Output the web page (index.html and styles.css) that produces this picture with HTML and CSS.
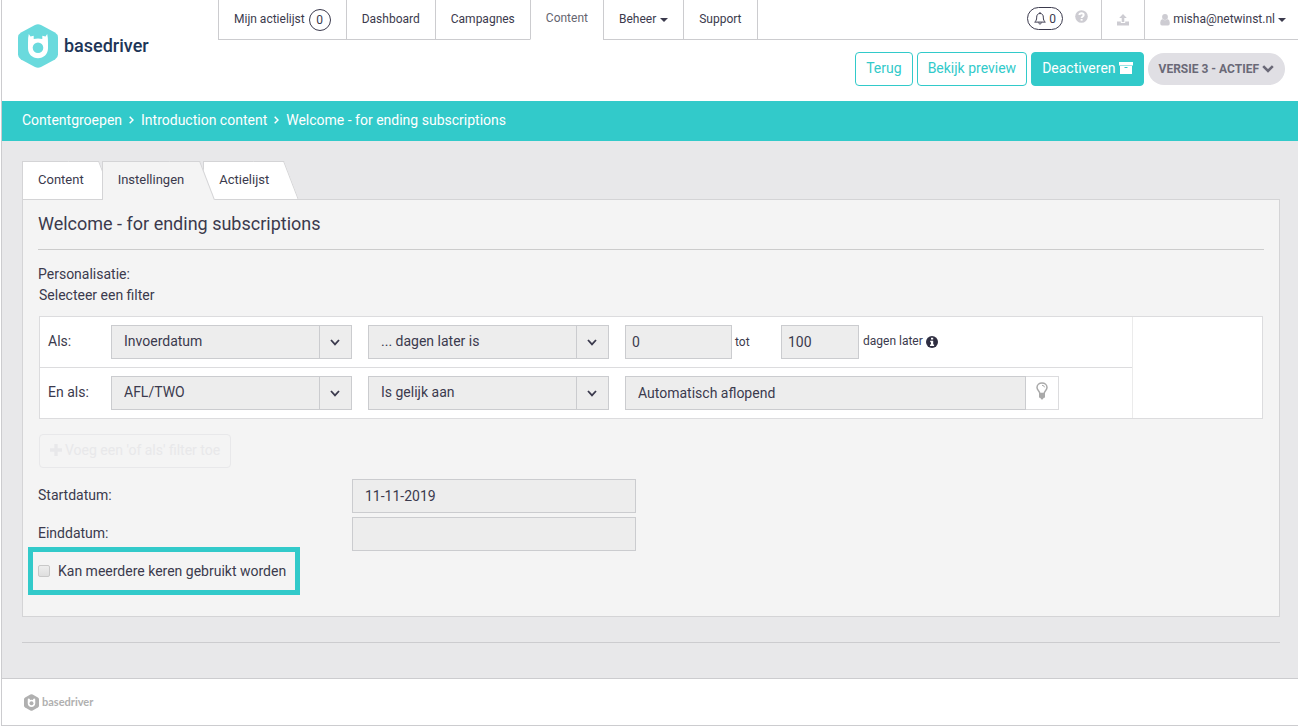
FILE: index.html
```html
<!DOCTYPE html>
<html lang="nl">
<head>
<meta charset="utf-8">
<title>Basedriver - Instellingen</title>
<link rel="stylesheet" href="styles.css">
</head>
<body>
<div class="app">
  <header class="header">
    <a class="brand" href="#">
      <svg class="brand-mark" viewBox="0 0 40 44" aria-hidden="true">
        <path fill="#6adadd" d="M17 .9q3-1.500 6 0l14 7.500q3 1.800 3 5v17q0 3.200-3 5l-14 7.700q-3 1.500-6 0L3 35.400q-3-1.800-3-5v-17q0-3.200 3-5z"/>
        <path fill="#fff" d="M10.800 10l1.700 2.500 3.200-.7v3.200q4.300-1.200 8.600 0v-3.200l3.200.7L29.200 10q1 4 .8 9v5.200c0 5.700-4.300 10-10 10s-10-4.300-10-10V19q-.2-5 .8-9z"/>
        <circle cx="20" cy="23.800" r="5.300" fill="#6adadd"/>
      </svg>
      <span class="brand-name">basedriver</span>
    </a>
    <div class="header-main">
      <nav class="nav">
        <a class="nav-item" href="#">Mijn actielijst <span class="count">0</span></a>
        <a class="nav-item" href="#">Dashboard</a>
        <a class="nav-item" href="#">Campagnes</a>
        <a class="nav-item nav-item-active" href="#">Content</a>
        <a class="nav-item" href="#">Beheer <span class="caret"></span></a>
        <a class="nav-item" href="#">Support</a>
        <div class="nav-tools">
          <button class="bell" type="button" aria-label="Meldingen">
            <svg width="12" height="13" viewBox="0 0 12 13" fill="none" stroke="#3b3a4d" aria-hidden="true"><path d="M6 1.500c-2.400 0-3.300 1.700-3.300 3.600 0 2.900-.8 4-2 5h10.600c-1.200-1-2-2.100-2-5 0-1.900-.9-3.600-3.300-3.600zM6 0v1.500M4.700 10.500c0 2 2.600 2 2.600 0"/></svg>
            <span>0</span>
          </button>
          <a class="help" href="#" aria-label="Help">
            <svg width="13" height="13" viewBox="0 0 13 13" aria-hidden="true"><circle cx="6.500" cy="6.500" r="6.300" fill="#cdccd2"/><path d="M4.400 5.100c0-2.500 4.300-2.400 4.300-.1 0 1.500-2.100 1.400-2.100 3.100" fill="none" stroke="#fff" stroke-width="1.900"/><path d="M5.600 9h2v1.700h-2z" fill="#fff"/></svg>
          </a>
        </div>
        <a class="nav-item" href="#" aria-label="Uploaden">
          <svg width="12" height="12" viewBox="0 0 12 12" fill="#cdccd2" aria-hidden="true"><path d="M6 0l3.800 4H7.300v4H4.700V4H2.200z"/><path d="M0 7.500h3.800V9h4.400V7.500H12v4H0z"/></svg>
        </a>
        <a class="nav-item account" href="#">
          <svg width="10" height="12" viewBox="0 0 10 12" fill="#cdccd2" aria-hidden="true"><circle cx="5" cy="3" r="2.900"/><path d="M2.200 5q2.800 2.500 5.600 0Q9.800 5.800 9.800 9q0 2.500-1.800 2.500H2Q.2 11.500.2 9q0-3.200 2-4z"/></svg>
          misha@netwinst.nl <span class="caret"></span>
        </a>
      </nav>
      <div class="actions">
        <button class="btn" type="button">Terug</button>
        <button class="btn" type="button">Bekijk preview</button>
        <button class="btn btn-solid" type="button">Deactiveren
          <svg width="14" height="12" viewBox="0 0 14 12" aria-hidden="true"><path fill="#fff" d="M0 0h14v3.500H0zM1 4h12v8H1z"/><path fill="#32caca" d="M5.500 5h3v1h-3z"/></svg>
        </button>
        <button class="version" type="button">VERSIE 3 - ACTIEF
          <svg width="12" height="8" viewBox="0 0 12 8" fill="none" stroke="#6a6977" stroke-width="2.600" aria-hidden="true"><path d="M1.200 1.200L6 6l4.800-4.800"/></svg>
        </button>
      </div>
    </div>
  </header>

  <nav class="crumbs" aria-label="Kruimelpad">
    <a href="#">Contentgroepen</a>
    <svg width="5" height="8" viewBox="0 0 5 8" aria-hidden="true"><path d="M.7.700L4 4 .7 7.300"/></svg>
    <a href="#">Introduction content</a>
    <svg width="5" height="8" viewBox="0 0 5 8" aria-hidden="true"><path d="M.7.700L4 4 .7 7.300"/></svg>
    <a href="#">Welcome - for ending subscriptions</a>
  </nav>

  <main class="main">
    <nav class="tabs">
      <a class="tab" href="#">Content</a>
      <a class="tab tab-active" href="#">Instellingen</a>
      <a class="tab" href="#">Actielijst</a>
    </nav>
    <section class="panel">
      <h1 class="title">Welcome - for ending subscriptions</h1>
      <p class="intro">Personalisatie:</p>
      <div class="filter">
        <p class="text">Selecteer een filter</p>
        <div class="rules">
          <div class="rules-list">
            <div class="rule">
              <label class="rule-label" for="field1">Als:</label>
              <span class="select">
                <select id="field1"><option>Invoerdatum</option></select>
                <svg width="10" height="7" viewBox="0 0 10 7" aria-hidden="true"><path d="M1 1l4 4.400L9 1"/></svg>
              </span>
              <span class="select">
                <select aria-label="Voorwaarde"><option>... dagen later is</option></select>
                <svg width="10" height="7" viewBox="0 0 10 7" aria-hidden="true"><path d="M1 1l4 4.400L9 1"/></svg>
              </span>
              <div class="range">
                <input class="input input-from" id="from" type="text" value="0" aria-label="Van">
                <label class="range-to" for="to">tot</label>
                <input class="input input-to" id="to" type="text" value="100">
                <span class="range-unit">dagen later
                  <svg width="12" height="12" viewBox="0 0 12 12" aria-hidden="true"><circle cx="6" cy="6" r="6" fill="#2f2e41"/><path fill="#fff" d="M5 1.700h2.200v1.900H5zM4.200 4.700h3v3.700h.9V10H4V8.400h1V6.200h-.8z"/></svg>
                </span>
              </div>
            </div>
            <div class="rule">
              <label class="rule-label" for="field2">En als:</label>
              <span class="select">
                <select id="field2"><option>AFL/TWO</option></select>
                <svg width="10" height="7" viewBox="0 0 10 7" aria-hidden="true"><path d="M1 1l4 4.400L9 1"/></svg>
              </span>
              <span class="select">
                <select aria-label="Voorwaarde"><option>Is gelijk aan</option></select>
                <svg width="10" height="7" viewBox="0 0 10 7" aria-hidden="true"><path d="M1 1l4 4.400L9 1"/></svg>
              </span>
              <div class="value">
                <input class="input input-wide" type="text" value="Automatisch aflopend" aria-label="Waarde">
                <button class="hint" type="button" aria-label="Suggesties">
                  <svg width="12" height="18" viewBox="0 0 12 18" aria-hidden="true"><path d="M3.800 11.500C3.800 9 1 8.500 1 5.500 1 2.900 3.200 1 6 1s5 1.900 5 4.500c0 3-2.800 3.500-2.800 6z" fill="none" stroke="#a9a9a9" stroke-width="1.500"/><path d="M6 3.300q2.300 0 2.500 2" fill="none" stroke="#a9a9a9"/><path d="M3 11.300h6v4.200L7.500 16q-.3 1.600-1.500 1.600T4.500 16L3 15.500z" fill="#a9a9a9"/></svg>
                </button>
              </div>
            </div>
          </div>
          <div class="rules-side"></div>
        </div>
        <button class="add" type="button" disabled>
          <svg width="12" height="12" viewBox="0 0 12 12" aria-hidden="true"><path fill="#e8e8ea" d="M4.300 0h3.400v4.300H12v3.400H7.700V12H4.300V7.700H0V4.300h4.300z"/></svg>
          Voeg een 'of als' filter toe
        </button>
      </div>
      <div class="dates">
        <label for="start">Startdatum:</label>
        <input class="input input-wide" id="start" type="text" value="11-11-2019">
        <label for="end">Einddatum:</label>
        <input class="input input-wide" id="end" type="text">
      </div>
      <label class="check"><input type="checkbox"> Kan meerdere keren gebruikt worden</label>
    </section>
    <hr class="rule-line">
  </main>

  <footer class="footer">
    <svg width="15" height="17" viewBox="0 0 40 44" aria-hidden="true">
      <path fill="#b0b0b0" d="M17 .9q3-1.500 6 0l14 7.500q3 1.800 3 5v17q0 3.200-3 5l-14 7.700q-3 1.500-6 0L3 35.400q-3-1.800-3-5v-17q0-3.200 3-5z"/>
      <path fill="#fff" d="M10.800 10l1.700 2.500 3.200-.7v3.200q4.300-1.200 8.600 0v-3.200l3.200.7L29.200 10q1 4 .8 9v5.200c0 5.700-4.300 10-10 10s-10-4.300-10-10V19q-.2-5 .8-9z"/>
      <circle cx="20" cy="23.800" r="5.300" fill="#b0b0b0"/>
    </svg>
    <span>basedriver</span>
  </footer>
</div>
</body>
</html>
```
FILE: styles.css
```css
* { box-sizing: border-box; }

body {
  margin: 0;
  background: #fff;
  color: #3b3a4d;
  font: 14px/21px Roboto, "Liberation Sans", sans-serif;
}

a { color: inherit; text-decoration: none; }
p, h1 { margin: 0; font-weight: 400; }
button, input, select { font: inherit; color: inherit; margin: 0; }
svg { flex: none; }

.app {
  display: flex;
  flex-direction: column;
  min-height: 100vh;
  margin-left: 1px;
  border-left: 1px solid #cccccf;
  border-bottom: 1px solid #cccccf;
}

/* Header */
.header { display: flex; height: 101px; }

.brand {
  display: flex;
  align-items: center;
  gap: 6px;
  width: 216px;
  padding: 0 0 10px 16px;
}
.brand-mark { width: 40px; height: 44px; }
.brand-name { color: #1d3557; font-size: 18px; font-weight: 500; }

.header-main { flex: 1; display: flex; flex-direction: column; }

.nav { display: flex; font-size: 12px; line-height: 39px; }
.nav-item {
  display: flex;
  align-items: center;
  gap: 4px;
  height: 40px;
  padding: 0 15px;
  border-left: 1px solid #cccccf;
  border-bottom: 1px solid #cccccf;
  white-space: nowrap;
}
.nav-item-active { border-bottom-color: transparent; color: #66656f; padding-bottom: 2px; }
.count {
  width: 22px;
  height: 22px;
  border: 1px solid #3b3a4d;
  border-radius: 11px;
  line-height: 20px;
  text-align: center;
}
.caret {
  border: 4px solid transparent;
  border-top-color: #3b3a4d;
  border-bottom: 0;
}
.nav-tools {
  flex: 1;
  display: flex;
  justify-content: flex-end;
  gap: 12px;
  padding: 7px 13px 0 0;
  border-left: 1px solid #cccccf;
  border-bottom: 1px solid #cccccf;
}
.bell {
  display: flex;
  align-items: center;
  justify-content: center;
  gap: 3px;
  width: 36px;
  height: 23px;
  padding: 0;
  border: 1px solid #3b3a4d;
  border-radius: 12px;
  background: #fff;
  line-height: 20px;
}
.help { display: flex; padding-top: 3px; height: 16px; }
.account { gap: 3px; padding-right: 12px; }

.actions {
  display: flex;
  justify-content: flex-end;
  align-items: center;
  gap: 4px;
  padding: 12px 13px 0 0;
}
.btn {
  display: flex;
  align-items: center;
  gap: 3px;
  height: 34px;
  padding: 0 10px 2px;
  border: 1px solid #32caca;
  border-radius: 4px;
  background: #fff;
  color: #32caca;
}
.btn-solid { background: #32caca; color: #fff; }
.version {
  display: flex;
  align-items: center;
  gap: 3px;
  height: 32px;
  padding: 0 11px;
  border: 0;
  border-radius: 16px;
  background: #e0dfe4;
  color: #6a6977;
  font-size: 12px;
  font-weight: 700;
}

/* Breadcrumb */
.crumbs {
  display: flex;
  align-items: center;
  gap: 7px;
  height: 40px;
  padding: 0 20px 2px;
  background: #32caca;
  color: #fff;
}
.crumbs svg { fill: none; stroke: #fff; stroke-width: 1.500; }

/* Tabs */
.main { flex: 1; padding: 20px 18px 35px 20px; background: #e8e8ea; }
.tabs { display: flex; height: 38px; font-size: 13px; }
.tab {
  position: relative;
  isolation: isolate;
  height: 38px;
  padding: 0 18px 0 16px;
  line-height: 38px;
}
.tab::before,
.tab::after {
  content: "";
  position: absolute;
  z-index: -1;
  top: 0;
  bottom: 0;
  border-top: 1px solid #d4d4d6;
  background: #fff;
}
.tab::before { left: 0; right: 18px; border-left: 1px solid #d4d4d6; }
.tab::after {
  right: 3px;
  width: 30px;
  border-right: 1px solid #d4d4d6;
  transform: skewX(21deg);
  transform-origin: top right;
}
.tab-active { z-index: 1; padding-right: 19px; }
.tab-active::before,
.tab-active::after { bottom: -1px; background: #f4f4f4; }

/* Panel */
.panel {
  padding: 0 15px 31px;
  border: 1px solid #d4d4d6;
  background: #f4f4f4;
}
.title {
  padding-bottom: 1px;
  border-bottom: 1px solid #cccccc;
  font-size: 18px;
  line-height: 48px;
}
.intro { margin-top: 14px; }
.filter { padding: 0 1px; }

.rules {
  display: flex;
  margin-top: 10px;
  border: 1px solid #dcdcde;
  background: #fff;
}
.rules-list { flex: 1; }
.rules-side { width: 130px; border-left: 1px solid #ebebeb; }
.rule {
  display: grid;
  grid-template-columns: 47px 241fr 241fr 434fr;
  column-gap: 16px;
  align-items: center;
  height: 50px;
  padding: 0 73px 0 8px;
}
.rule + .rule { height: 51px; border-top: 1px solid #dcdcde; }
.rule-label { padding-bottom: 2px; }

.select { position: relative; display: block; }
.select::after {
  content: "";
  position: absolute;
  top: 0;
  bottom: 0;
  right: 32px;
  border-left: 1px solid #cbcccf;
}
.select svg {
  position: absolute;
  right: 12px;
  top: 14px;
  fill: none;
  stroke: #3b3a4d;
  stroke-width: 1.800;
  pointer-events: none;
}
select {
  display: block;
  appearance: none;
  width: 100%;
  height: 34px;
  padding: 0 40px 2px 12px;
  border: 1px solid #cbcccf;
  border-radius: 0;
  background: #ededed;
}
.input {
  min-width: 0;
  height: 34px;
  padding: 0 6px;
  border: 1px solid #cbcccf;
  border-radius: 0;
  background: #ededed;
}
.input-wide { padding: 0 12px; }
.input-from { width: 107px; }
.input-to { width: 78px; }
.range { display: flex; align-items: center; font-size: 12px; }
.range .input { font-size: 14px; }
.range-to { width: 49px; padding-left: 3px; }
.range-unit { display: flex; align-items: center; gap: 3px; padding: 0 0 1px 4px; }
.value { display: flex; }
.value .input { flex: 1; }
.hint {
  display: flex;
  justify-content: center;
  width: 33px;
  height: 34px;
  padding: 5px 0 0;
  border: 1px solid #dcdcde;
  border-left: 0;
  background: #fff;
}

.add {
  display: flex;
  align-items: center;
  gap: 3px;
  height: 34px;
  margin-top: 15px;
  padding: 0 10px 2px;
  border: 1px solid #e8e8ea;
  border-radius: 4px;
  background: transparent;
  color: #e8e8ea;
}

.dates {
  display: grid;
  grid-template-columns: 314fr 284fr 628fr;
  row-gap: 4px;
  margin-top: 11px;
}
.dates label { grid-column: 1; line-height: 32px; }
.dates .input { grid-column: 2; }

.check {
  position: relative;
  display: flex;
  align-items: center;
  gap: 8px;
  width: max-content;
  height: 28px;
  margin-top: 6px;
  padding-right: 4px;
}
.check::after {
  content: "";
  position: absolute;
  inset: -10px;
  border: 5px solid #32caca;
  pointer-events: none;
}
.check input {
  appearance: none;
  width: 12px;
  height: 12px;
  border: 1px solid #c8c8c8;
  border-radius: 2px;
  background: linear-gradient(#ededed, #dedede);
}

.rule-line { margin: 25px 0 0; border: 0; border-top: 1px solid #cccccf; }

.footer {
  display: flex;
  align-items: center;
  gap: 3px;
  height: 47px;
  padding-left: 22px;
  border-top: 1px solid #cccccf;
  background: #fff;
  color: #b0b0b0;
  font: 700 11px/16px Lato, sans-serif;
}
```
